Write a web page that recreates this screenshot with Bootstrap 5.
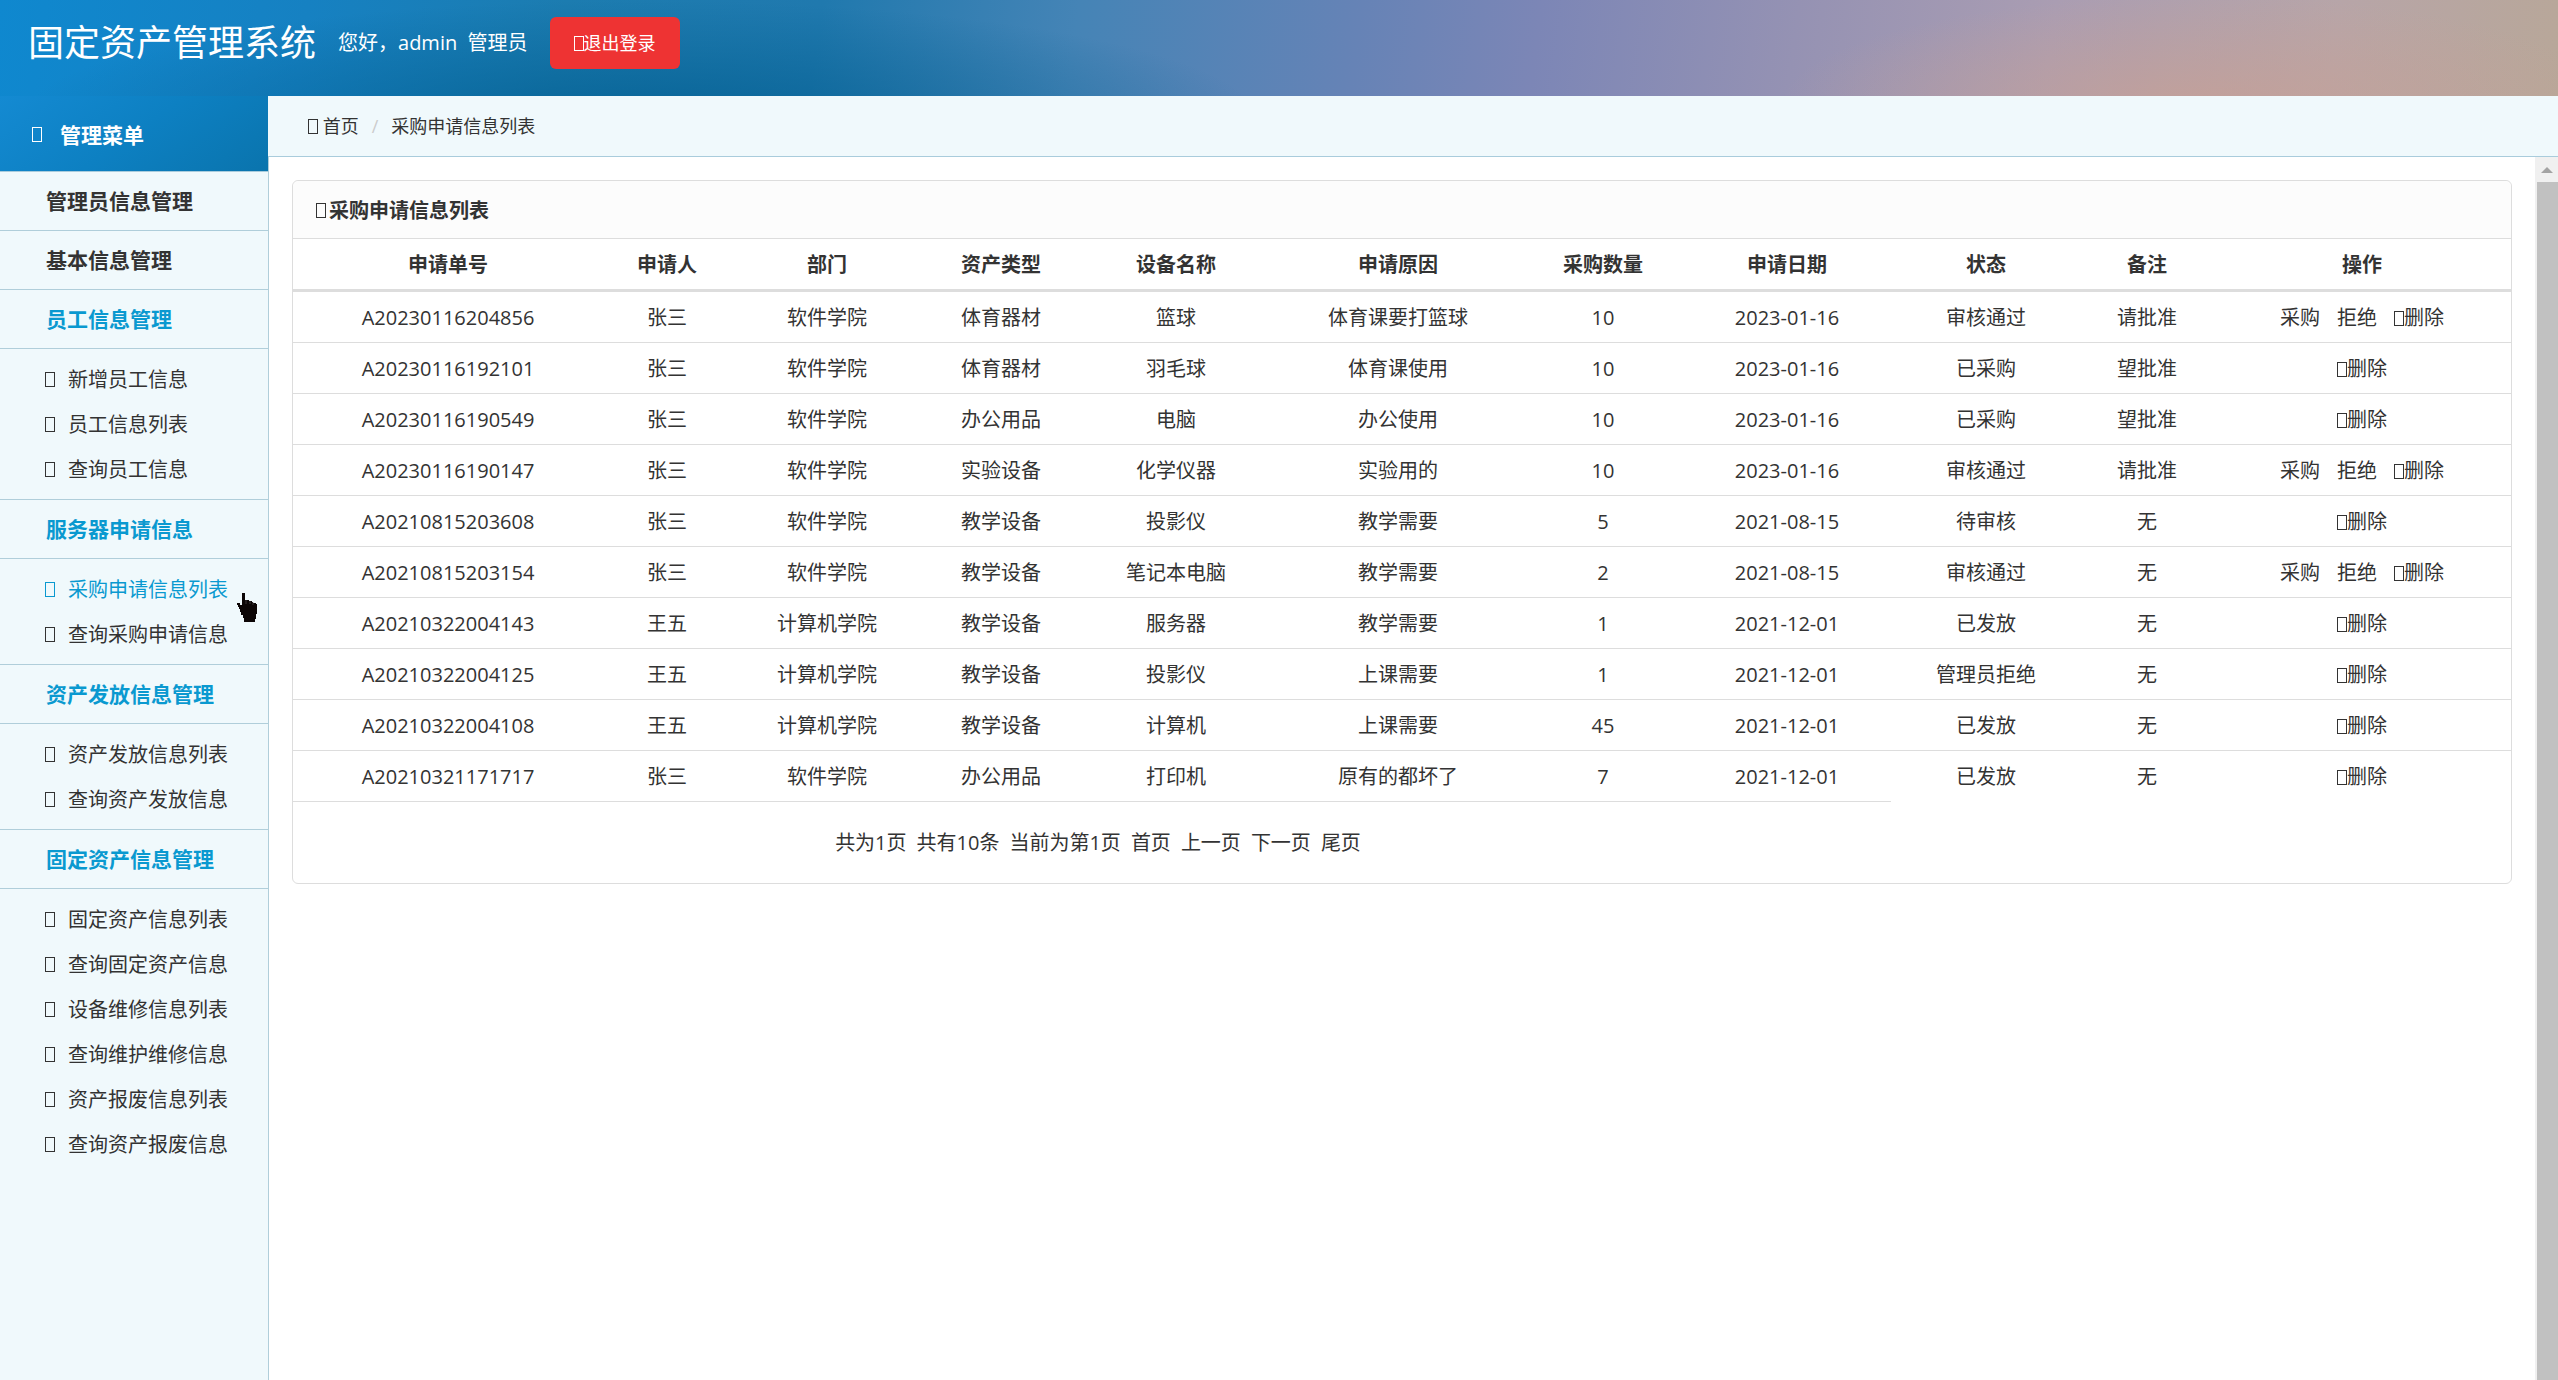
<!DOCTYPE html>
<html lang="zh-CN">
<head>
<meta charset="utf-8">
<meta name="viewport" content="width=device-width, initial-scale=1">
<title>固定资产管理系统</title>
<link href="https://cdn.jsdelivr.net/npm/bootstrap@5.3.0/dist/css/bootstrap.min.css" rel="stylesheet">
<style>
  body { font-family: "Open Sans", "Noto Sans CJK SC", sans-serif; font-size: 20px; line-height: 26px; color: #333; background: #fff; }
  a { color: inherit; text-decoration: none; }
  a:hover { color: #0a99d0; }

  /* top bar */
  .topbar {
    height: 96px; padding: 0 28px 10px; gap: 22px; color: #fff;
    background:
      radial-gradient(ellipse 420px 110px at 2200px 110%, rgba(200,160,148,.75), rgba(200,160,148,0)),
      radial-gradient(ellipse 620px 120px at 640px 125%, rgba(0,92,142,.75), rgba(0,100,150,0)),
      linear-gradient(98deg, #0f88cf 0%, #1681c2 12%, #1c7cb0 22%, #2079ae 32%, #4584b6 42%, #6683b6 53%, #7c86b6 60%, #9592b3 70%, #aa9db2 80%, #b7a5a8 91%, #b8a799 100%);
  }
  .topbar h1 { font-size: 36px; line-height: 48px; font-weight: 400; }
  .logout { height: 52px; padding: 0 24px; border: 0; border-radius: 6px; background: #e33; color: #fff; font-size: 18px; }

  /* placeholder glyph before labels */
  .glyph { flex: none; display: inline-block; width: 10px; height: 15px; border: 1px solid currentColor; vertical-align: -1px; }

  /* side menu */
  .sidemenu { flex: 0 0 268px; background: #f0f9fc; }
  .menu-title { height: 76px; padding: 2px 32px 0; gap: 18px; font-size: 21px; font-weight: 700; color: #fff; border-bottom: 1px solid #a9ccdc; background: linear-gradient(145deg, #148ad2 0%, #0d80c2 50%, #0a74ad 100%); }
  .menu-head { height: 59px; padding-left: 46px; font-size: 21px; font-weight: 700; border-bottom: 1px solid #b0ceda; }
  .menu-head.open, .menu-item.current { color: #0a99d0; }
  .menu-sub { padding: 8px 0 7px; border-bottom: 1px solid #b0ceda; }
  .menu-sub:last-child { border-bottom: 0; }
  .menu-item { height: 45px; padding-left: 45px; gap: 13px; }
  .pointer { position: absolute; left: 236px; top: 592px; width: 22px; height: 32px; }

  /* content */
  .crumbs { height: 61px; padding: 0 40px; font-size: 18px; background: #f0f9fc; border-bottom: 1px solid #a9ccdc; }
  .crumbs .breadcrumb-item + .breadcrumb-item { padding-left: 13px; }
  .crumbs .breadcrumb-item + .breadcrumb-item::before { padding-right: 13px; color: #ccc; }
  .crumbs .breadcrumb-item.active { color: #333; }
  .pane { border-left: 1px solid #b0ceda; }
  .pane-body { padding: 23px; }
  .listing { border: 1px solid #ddd; border-radius: 6px; }
  .listing-head { height: 58px; padding: 2px 23px 0; gap: 3px; font-weight: 700; background: #fcfcfc; border-bottom: 1px solid #ddd; border-radius: 6px 6px 0 0; }
  .grid { table-layout: fixed; width: 100%; border-collapse: separate; border-spacing: 0; text-align: center; }
  .grid th, .grid td { padding: 13px 0 11px; }
  .grid th { border-bottom: 3px solid #ddd; }
  .grid td { border-top: 1px solid #ddd; }
  .grid tbody tr:first-child td { border-top: 0; }
  .grid tfoot td { padding: 28px 0 27px 12px; }
  .w-id { width: 310px } .w-user { width: 128px } .w-dept { width: 192px } .w-type { width: 156px }
  .w-dev { width: 194px } .w-why { width: 250px } .w-qty { width: 160px } .w-date { width: 208px }
  .w-state { width: 190px } .w-note { width: 132px } .w-act { width: 298px }
  .acts { gap: 17px; }
  .pages { gap: 10px; }

  /* scroll rail */
  .rail { flex: 0 0 24px; background: #f0f0f0; }
  .rail-up { height: 25px; }
  .rail-thumb { margin: 0 1px 0 2px; background: #c1c1c1; }
</style>
<script src="https://cdn.jsdelivr.net/npm/bootstrap@5.3.0/dist/js/bootstrap.bundle.min.js"></script>
</head>
<body>
<div class="d-flex flex-column min-vh-100 position-relative">
  <header class="topbar d-flex align-items-center">
    <h1 class="mb-0">固定资产管理系统</h1>
    <span>您好，admin&nbsp; 管理员</span>
    <button type="button" class="logout"><span class="glyph"></span>退出登录</button>
  </header>
  <div class="d-flex flex-grow-1">
    <nav class="sidemenu" aria-label="管理菜单">
      <div class="menu-title d-flex align-items-center"><span class="glyph"></span>管理菜单</div>
      <a href="#" class="menu-head d-flex align-items-center">管理员信息管理</a>
      <a href="#" class="menu-head d-flex align-items-center">基本信息管理</a>
      <a href="#" class="menu-head open d-flex align-items-center">员工信息管理</a>
      <div class="menu-sub">
        <a href="#" class="menu-item d-flex align-items-center"><span class="glyph"></span>新增员工信息</a>
        <a href="#" class="menu-item d-flex align-items-center"><span class="glyph"></span>员工信息列表</a>
        <a href="#" class="menu-item d-flex align-items-center"><span class="glyph"></span>查询员工信息</a>
      </div>
      <a href="#" class="menu-head open d-flex align-items-center">服务器申请信息</a>
      <div class="menu-sub">
        <a href="#" class="menu-item current d-flex align-items-center"><span class="glyph"></span>采购申请信息列表</a>
        <a href="#" class="menu-item d-flex align-items-center"><span class="glyph"></span>查询采购申请信息</a>
      </div>
      <a href="#" class="menu-head open d-flex align-items-center">资产发放信息管理</a>
      <div class="menu-sub">
        <a href="#" class="menu-item d-flex align-items-center"><span class="glyph"></span>资产发放信息列表</a>
        <a href="#" class="menu-item d-flex align-items-center"><span class="glyph"></span>查询资产发放信息</a>
      </div>
      <a href="#" class="menu-head open d-flex align-items-center">固定资产信息管理</a>
      <div class="menu-sub">
        <a href="#" class="menu-item d-flex align-items-center"><span class="glyph"></span>固定资产信息列表</a>
        <a href="#" class="menu-item d-flex align-items-center"><span class="glyph"></span>查询固定资产信息</a>
        <a href="#" class="menu-item d-flex align-items-center"><span class="glyph"></span>设备维修信息列表</a>
        <a href="#" class="menu-item d-flex align-items-center"><span class="glyph"></span>查询维护维修信息</a>
        <a href="#" class="menu-item d-flex align-items-center"><span class="glyph"></span>资产报废信息列表</a>
        <a href="#" class="menu-item d-flex align-items-center"><span class="glyph"></span>查询资产报废信息</a>
      </div>
    </nav>
    <div class="d-flex flex-column flex-grow-1">
      <nav class="crumbs d-flex align-items-center" aria-label="breadcrumb">
        <ol class="breadcrumb mb-0">
          <li class="breadcrumb-item"><a href="#"><span class="glyph"></span> 首页</a></li>
          <li class="breadcrumb-item active">采购申请信息列表</li>
        </ol>
      </nav>
      <div class="pane d-flex flex-grow-1">
        <main class="pane-body flex-grow-1">
          <section class="listing">
            <div class="listing-head d-flex align-items-center"><span class="glyph"></span>采购申请信息列表</div>
            <table class="grid">
              <colgroup>
                <col class="w-id"><col class="w-user"><col class="w-dept"><col class="w-type"><col class="w-dev"><col class="w-why"><col class="w-qty"><col class="w-date"><col class="w-state"><col class="w-note"><col class="w-act">
              </colgroup>
              <thead>
                <tr><th>申请单号</th><th>申请人</th><th>部门</th><th>资产类型</th><th>设备名称</th><th>申请原因</th><th>采购数量</th><th>申请日期</th><th>状态</th><th>备注</th><th>操作</th></tr>
              </thead>
              <tbody>
                <tr><td>A20230116204856</td><td>张三</td><td>软件学院</td><td>体育器材</td><td>篮球</td><td>体育课要打篮球</td><td>10</td><td>2023-01-16</td><td>审核通过</td><td>请批准</td><td><div class="acts d-flex justify-content-center"><a href="#">采购</a><a href="#">拒绝</a><a href="#"><span class="glyph"></span>删除</a></div></td></tr>
                <tr><td>A20230116192101</td><td>张三</td><td>软件学院</td><td>体育器材</td><td>羽毛球</td><td>体育课使用</td><td>10</td><td>2023-01-16</td><td>已采购</td><td>望批准</td><td><a href="#"><span class="glyph"></span>删除</a></td></tr>
                <tr><td>A20230116190549</td><td>张三</td><td>软件学院</td><td>办公用品</td><td>电脑</td><td>办公使用</td><td>10</td><td>2023-01-16</td><td>已采购</td><td>望批准</td><td><a href="#"><span class="glyph"></span>删除</a></td></tr>
                <tr><td>A20230116190147</td><td>张三</td><td>软件学院</td><td>实验设备</td><td>化学仪器</td><td>实验用的</td><td>10</td><td>2023-01-16</td><td>审核通过</td><td>请批准</td><td><div class="acts d-flex justify-content-center"><a href="#">采购</a><a href="#">拒绝</a><a href="#"><span class="glyph"></span>删除</a></div></td></tr>
                <tr><td>A20210815203608</td><td>张三</td><td>软件学院</td><td>教学设备</td><td>投影仪</td><td>教学需要</td><td>5</td><td>2021-08-15</td><td>待审核</td><td>无</td><td><a href="#"><span class="glyph"></span>删除</a></td></tr>
                <tr><td>A20210815203154</td><td>张三</td><td>软件学院</td><td>教学设备</td><td>笔记本电脑</td><td>教学需要</td><td>2</td><td>2021-08-15</td><td>审核通过</td><td>无</td><td><div class="acts d-flex justify-content-center"><a href="#">采购</a><a href="#">拒绝</a><a href="#"><span class="glyph"></span>删除</a></div></td></tr>
                <tr><td>A20210322004143</td><td>王五</td><td>计算机学院</td><td>教学设备</td><td>服务器</td><td>教学需要</td><td>1</td><td>2021-12-01</td><td>已发放</td><td>无</td><td><a href="#"><span class="glyph"></span>删除</a></td></tr>
                <tr><td>A20210322004125</td><td>王五</td><td>计算机学院</td><td>教学设备</td><td>投影仪</td><td>上课需要</td><td>1</td><td>2021-12-01</td><td>管理员拒绝</td><td>无</td><td><a href="#"><span class="glyph"></span>删除</a></td></tr>
                <tr><td>A20210322004108</td><td>王五</td><td>计算机学院</td><td>教学设备</td><td>计算机</td><td>上课需要</td><td>45</td><td>2021-12-01</td><td>已发放</td><td>无</td><td><a href="#"><span class="glyph"></span>删除</a></td></tr>
                <tr><td>A20210321171717</td><td>张三</td><td>软件学院</td><td>办公用品</td><td>打印机</td><td>原有的都坏了</td><td>7</td><td>2021-12-01</td><td>已发放</td><td>无</td><td><a href="#"><span class="glyph"></span>删除</a></td></tr>
              </tbody>
              <tfoot>
                <tr><td colspan="8"><div class="pages d-flex justify-content-center"><span>共为1页</span><span>共有10条</span><span>当前为第1页</span><a href="#">首页</a><a href="#">上一页</a><a href="#">下一页</a><a href="#">尾页</a></div></td></tr>
              </tfoot>
            </table>
          </section>
        </main>
        <div class="rail d-flex flex-column" aria-hidden="true">
          <div class="rail-up d-flex align-items-center justify-content-center"><svg width="12" height="6" viewBox="0 0 12 6"><path d="M6 0 12 6H0z" fill="#a3a3a3"/></svg></div>
          <div class="rail-thumb flex-grow-1"></div>
        </div>
      </div>
    </div>
  </div>
  <svg class="pointer" viewBox="0 0 22 32" aria-hidden="true"><path d="M6 1h3v7h4v1h3v1h1v1h3v1h1v10h-1v5h-1v3H8v-4H7v-3H5v-3H4v-3H3v-2H2v-2H1v-2h3v2h2z" fill="#0c0606"/><path d="M10 8v4M14 9v3M17 10v3" stroke="#6b6566" stroke-width="1" opacity=".5"/></svg>
</div>
</body>
</html>
